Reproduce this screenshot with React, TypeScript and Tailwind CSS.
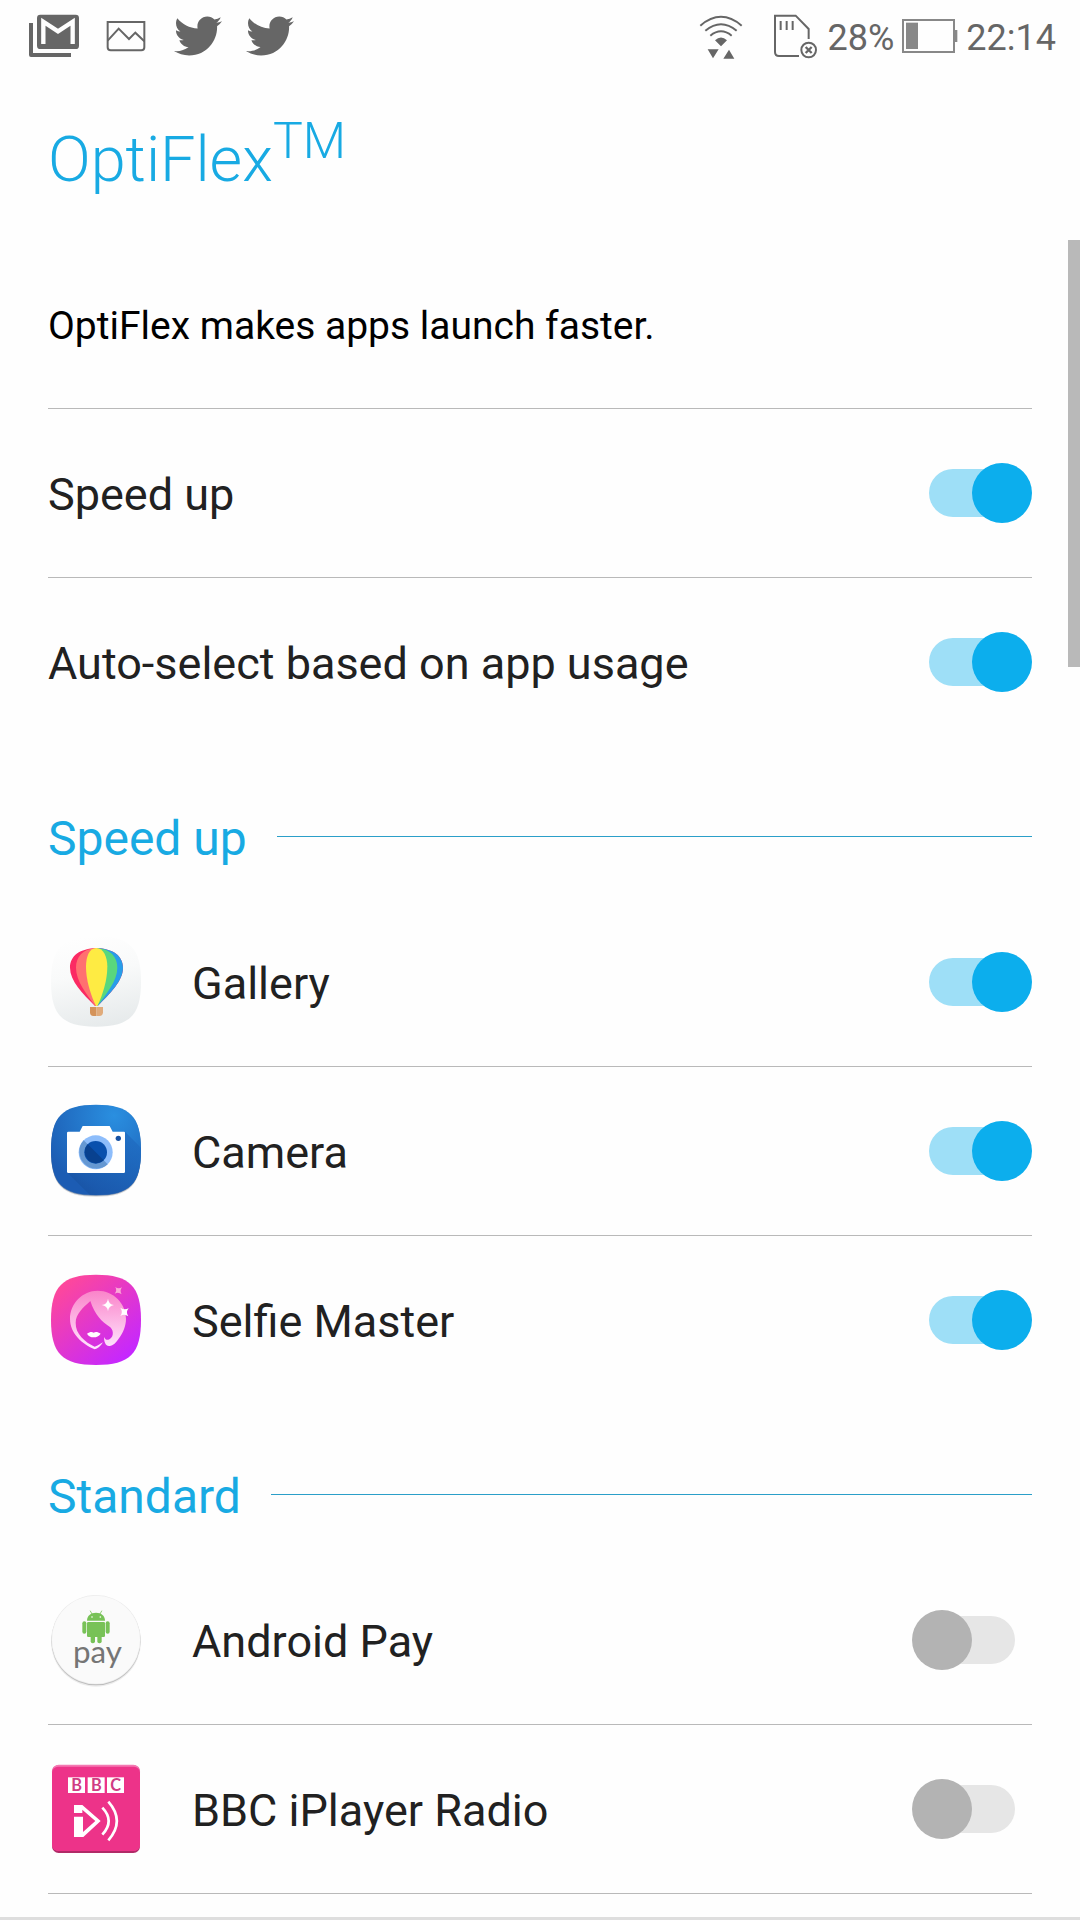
import { useState, type ReactNode } from "react";
import { FaTwitter } from "react-icons/fa";

type AppItem = { id: string; name: string; icon: ReactNode; enabled: boolean };

// shared rounded tile used by the stock system apps
const TILE = "M198 44 C300 44 333 80 333 180 C333 280 300 315 198 315 C97 315 63 280 63 180 C63 80 97 44 198 44Z";

function GalleryIcon() {
  return (
    <svg viewBox="54 12 288 288" className="size-24 shrink-0" aria-hidden="true">
      <defs>
        <linearGradient id="gallery-bg" x1="0.4" y1="0" x2="0.6" y2="1">
          <stop offset="0" stopColor="#fefefe" />
          <stop offset="0.4" stopColor="#f9fafa" />
          <stop offset="1" stopColor="#e6eaeb" />
        </linearGradient>
      </defs>
      <path d={TILE} transform="translate(0 -25)" fill="url(#gallery-bg)" />
      <path d="M199 55 C150 55 120 78 120 113 C120 153 158 190 195 228 H203 C240 190 279 153 279 113 C279 78 248 55 199 55Z" fill="#fb2a63" />
      <path d="M199 55 C248 55 279 78 279 113 C279 153 240 190 203 228 H199Z" fill="#289de9" />
      <path d="M199 55 C158 55 138 82 138 113 C138 153 170 193 196 228 H199Z" fill="#ff7070" />
      <path d="M199 55 C241 55 262 82 262 113 C262 153 228 193 202 228 H199Z" fill="#59d77d" />
      <path d="M199 54 C177 54 168 82 168 110 C168 150 182 195 198 228 H202 C218 195 232 150 232 110 C232 82 221 54 199 54Z" fill="#feeb43" />
      <path d="M180 231 H199 V258 H190 Q180 258 180 247Z" fill="#d4935a" />
      <path d="M199 231 H219 V247 Q219 258 208 258 H199Z" fill="#e0ab7b" />
    </svg>
  );
}

function CameraIcon() {
  return (
    <svg viewBox="54 39 288 288" className="size-24 shrink-0" aria-hidden="true">
      <defs>
        <radialGradient id="camera-bg" cx="0.7" cy="0.12" r="0.85">
          <stop offset="0" stopColor="#2a8fe0" />
          <stop offset="1" stopColor="#1c5cb3" />
        </radialGradient>
        <linearGradient id="camera-shadow" x1="0" y1="1" x2="0.9" y2="0.1">
          <stop offset="0" stopColor="#154a94" />
          <stop offset="0.3" stopColor="#1a58ab" />
          <stop offset="1" stopColor="#1f6cc2" />
        </linearGradient>
        <clipPath id="camera-clip">
          <path d={TILE} />
        </clipPath>
      </defs>
      <path d={TILE} transform="translate(0 5)" fill="#000" opacity="0.15" />
      <path d={TILE} transform="translate(0 2)" fill="#174a8e" opacity="0.6" />
      <path d={TILE} fill="url(#camera-bg)" />
      <path d="M285 125 L345 185 V330 H195 L112 248Z" fill="url(#camera-shadow)" clipPath="url(#camera-clip)" opacity="0.75" />
      <path d="M115 125 H149 L158 108 H239 L248 125 H282 Q285 125 285 128 V245 Q285 249 281 249 H115 Q111 249 111 245 V129 Q111 125 115 125Z" fill="#fff" />
      <circle cx="197" cy="187" r="51" fill="#8dbdfb" />
      <path d="M161 151 A51 51 0 0 0 233 223Z" fill="#6598d2" />
      <circle cx="197" cy="187" r="34" fill="#0950ad" />
      <path d="M173 163 A34 34 0 0 0 221 211Z" fill="#08418f" />
      <circle cx="265" cy="145" r="8" fill="#1652a4" />
    </svg>
  );
}

function SelfieIcon() {
  return (
    <svg viewBox="54 36 288 288" className="size-24 shrink-0" aria-hidden="true">
      <defs>
        <linearGradient id="selfie-bg" x1="0.1" y1="0.1" x2="0.8" y2="0.95">
          <stop offset="0" stopColor="#ff4899" />
          <stop offset="1" stopColor="#c527ff" />
        </linearGradient>
        <linearGradient id="selfie-hair" x1="0" y1="0" x2="0" y2="1">
          <stop offset="0" stopColor="#fa84c9" />
          <stop offset="1" stopColor="#ffe6ff" />
        </linearGradient>
      </defs>
      <path d={TILE} fill="url(#selfie-bg)" />
      <path
        d="M203 92 C250 92 288 130 288 176 C288 198 279 218 267 235 C258 248 249 259 237 258 C227 257 222 247 222 231 C226 239 230 240 235 239 C249 236 254 215 241 202 C215 184 195 166 181 123 C160 142 137 162 137 188 C136 222 165 246 194 260 C204 257 212 251 219 247 C213 258 202 266 194 268 C158 252 120 222 120 176 C120 130 158 92 203 92Z"
        fill="url(#selfie-hair)"
      />
      <path d="M171 221 C179 216 185 214 191 218 C197 214 204 216 212 221 C206 229 200 232 191 232 C182 232 176 229 171 221Z" fill="#fff" />
      <path d="M234 116 Q236 133 252 135 Q236 137 234 154 Q232 137 215 135 Q232 133 234 116Z" fill="#fff" />
      <path d="M271 143 Q282 152 296 145 Q286 156 295 169 Q283 160 271 168 Q280 156 271 143Z" fill="#fff" />
      <path d="M256 81 Q265 88 276 82 Q268 92 275 103 Q265 95 254 101 Q262 92 256 81Z" fill="#fbaad7" />
    </svg>
  );
}

function AndroidPayIcon() {
  return (
    <svg viewBox="54 36 288 288" className="size-24 shrink-0" aria-hidden="true">
      <circle cx="198" cy="185" r="135" fill="#000" opacity="0.07" />
      <circle cx="198" cy="182" r="134" fill="#000" opacity="0.2" />
      <circle cx="198" cy="179" r="134" fill="#ececec" />
      <circle cx="198" cy="179" r="132" fill="#fafafa" />
      <g fill="#78c257">
        <path d="M171 122 C171 107 182 98 198 98 C214 98 225 107 225 122Z" />
        <rect x="171" y="126" width="54" height="45" rx="4" />
        <rect x="157" y="124" width="12" height="37" rx="6" />
        <rect x="227" y="124" width="12" height="37" rx="6" />
        <rect x="182" y="160" width="13" height="30" rx="6" />
        <rect x="202" y="160" width="13" height="30" rx="6" />
      </g>
      <path d="M186 102 L181 93 M210 102 L215 93" stroke="#78c257" strokeWidth="2.5" strokeLinecap="round" />
      <circle cx="186" cy="111" r="2.5" fill="#fff" />
      <circle cx="211" cy="111" r="2.5" fill="#fff" />
      <text x="202" y="248" textAnchor="middle" fontFamily="Lato, sans-serif" fontSize="94" fill="#757575">pay</text>
    </svg>
  );
}

function BbcRadioIcon() {
  return (
    <svg viewBox="54 33 288 288" className="size-24 shrink-0" aria-hidden="true">
      <rect x="66" y="46" width="264" height="263" rx="20" fill="#b02a67" />
      <rect x="66" y="44" width="264" height="258" rx="20" fill="#f478b2" />
      <rect x="66" y="50" width="264" height="253" rx="18" fill="#ed3389" />
      <g fill="#fff">
        <rect x="114" y="82" width="51" height="47" />
        <rect x="173" y="82" width="51" height="47" />
        <rect x="231" y="82" width="51" height="47" />
        <path d="M132 165 H157 L212 213 L160 261 H132 V200 H159 V246 L196 213 L157 179 V189 H132Z" />
      </g>
      <g fill="#d03c84" fontFamily="Lato, sans-serif" fontWeight="700" fontSize="49" textAnchor="middle">
        <text x="140" y="123">B</text>
        <text x="199" y="123">B</text>
        <text x="257" y="123">C</text>
      </g>
      <path d="M217 173 Q255 213 217 254 M235 155 Q286 213 235 271" fill="none" stroke="#fff" strokeWidth="8" />
    </svg>
  );
}

function StatusBar() {
  return (
    <header className="flex h-[72px] items-center pl-[18px] pr-6 text-4xl text-[#666]">
      <svg viewBox="54 0 216 216" className="size-[72px]" aria-label="Gmail">
        <path d="M93 69 V165 H213" fill="none" stroke="#666" strokeWidth="12" strokeLinejoin="round" />
        <rect x="111" y="44" width="126" height="103" rx="10" fill="#666" />
        <path d="M130 132 V65 L174 94 L218 65 V132" fill="none" stroke="#fefefe" strokeWidth="13" />
        <path d="M136 57 H212 L174 82Z" fill="#666" />
      </svg>
      <svg viewBox="270 0 216 216" className="size-[72px]" fill="none" stroke="#666" strokeWidth="6" aria-label="Screenshot">
        <path d="M323 66 H433 V142 Q433 151 424 151 H332 Q323 151 323 142Z" />
        <path d="M323 122 L356 86 L387 117 L406 98 L433 124" />
      </svg>
      <span className="grid size-[72px] place-items-center"><FaTwitter size={48} /></span>
      <span className="grid size-[72px] place-items-center"><FaTwitter size={48} /></span>
      <div className="ml-auto flex items-center gap-2">
        <svg viewBox="54 36 138 144" className="mr-5 h-12 w-[46px]" fill="none" stroke="#666" strokeWidth="6" aria-label="Wi-Fi">
          <path d="M61 77 Q123 24 185 77 M76 92 Q123 53 170 92 M91 107 Q123 81 155 107" />
          <path d="M105 121 Q123 104 141 121 L123 139Z M83 148 H116 L99 175Z M130 176 L147 149 L163 176Z" fill="#666" stroke="none" />
        </svg>
        <svg viewBox="279 36 144 144" className="size-12" fill="none" stroke="#666" strokeWidth="6" aria-label="SD card">
          <path d="M360 168 H300 Q288 168 288 156 V47 H350 L389 87 V117" />
          <path d="M305 63 V90 M323 63 V90 M341 63 V90" />
          <circle cx="389" cy="150" r="22" />
          <path d="M380 141 L398 159 M398 141 L380 159" strokeWidth="7" />
        </svg>
        <span className="pt-1">28%</span>
        <svg viewBox="669 36 168 144" className="h-12 w-14" aria-label="Battery">
          <rect x="672" y="60" width="153" height="96" fill="none" stroke="#888" strokeWidth="6" />
          <rect x="681" y="68" width="36" height="79" fill="#888" />
          <rect x="825" y="90" width="10" height="36" fill="#888" />
        </svg>
        <time className="pt-1">22:14</time>
      </div>
    </header>
  );
}

function SwitchRow({ id, label, icon, defaultOn, divider = true }: { id: string; label: string; icon?: ReactNode; defaultOn: boolean; divider?: boolean }) {
  const [on, setOn] = useState(defaultOn);
  return (
    <div className={divider ? "border-b border-[#b9b9b9]" : ""}>
      <div className="flex h-[168px] items-center gap-12">
        {icon}
        <label htmlFor={id} className="flex-1 pt-1 text-[45px] leading-[54px] text-[#212121]">{label}</label>
        <input
          id={id}
          type="checkbox"
          role="switch"
          checked={on}
          onChange={(e) => setOn(e.target.checked)}
          className="relative h-[60px] w-[120px] shrink-0 cursor-pointer appearance-none before:absolute before:inset-x-[17px] before:inset-y-[6px] before:rounded-full before:bg-[#e6e6e6] after:absolute after:left-0 after:size-[60px] after:rounded-full after:bg-[#b3b3b3] checked:before:bg-[#9edff7] checked:after:left-[60px] checked:after:bg-[#0caeed]"
        />
      </div>
    </div>
  );
}

function SectionTitle({ children }: { children: string }) {
  return (
    <div className="flex h-[152px] items-center gap-[30px] pt-7">
      <h2 className="pt-[6px] text-[48px] leading-[56px] text-[#18aae3]">{children}</h2>
      <div className="h-px flex-1 bg-[#2b9fc9]" />
    </div>
  );
}

const speedUpApps: AppItem[] = [
  { id: "gallery", name: "Gallery", icon: <GalleryIcon />, enabled: true },
  { id: "camera", name: "Camera", icon: <CameraIcon />, enabled: true },
  { id: "selfie", name: "Selfie Master", icon: <SelfieIcon />, enabled: true },
];

const standardApps: AppItem[] = [
  { id: "android-pay", name: "Android Pay", icon: <AndroidPayIcon />, enabled: false },
  { id: "bbc-radio", name: "BBC iPlayer Radio", icon: <BbcRadioIcon />, enabled: false },
];

export default function App() {
  return (
    <div className="flex min-h-screen flex-col bg-[#fefefe] font-['Roboto',sans-serif]">
      <StatusBar />
      <div className="flex h-[168px] items-center px-12 pt-2">
        <h1 className="text-[63px] leading-[72px] font-light text-[#18aae3]">
          OptiFlex<sup className="-top-[23px] text-[50px]">TM</sup>
        </h1>
      </div>
      <main className="relative px-12">
        <div className="absolute top-0 right-0 h-[427px] w-3 bg-[#b9b9b9]" />
        <div className="flex h-[169px] items-center border-b border-[#b9b9b9]">
          <p className="pt-1 text-[39px] leading-[48px] text-black">OptiFlex makes apps launch faster.</p>
        </div>
        <SwitchRow id="speed-up" label="Speed up" defaultOn />
        <SwitchRow id="auto-select" label="Auto-select based on app usage" defaultOn divider={false} />
        <SectionTitle>Speed up</SectionTitle>
        {speedUpApps.map((app, i) => (
          <SwitchRow key={app.id} id={app.id} label={app.name} icon={app.icon} defaultOn={app.enabled} divider={i < speedUpApps.length - 1} />
        ))}
        <SectionTitle>Standard</SectionTitle>
        {standardApps.map((app) => (
          <SwitchRow key={app.id} id={app.id} label={app.name} icon={app.icon} defaultOn={app.enabled} />
        ))}
      </main>
      <div className="mt-auto h-[3px] bg-[#dedede]" />
    </div>
  );
}
